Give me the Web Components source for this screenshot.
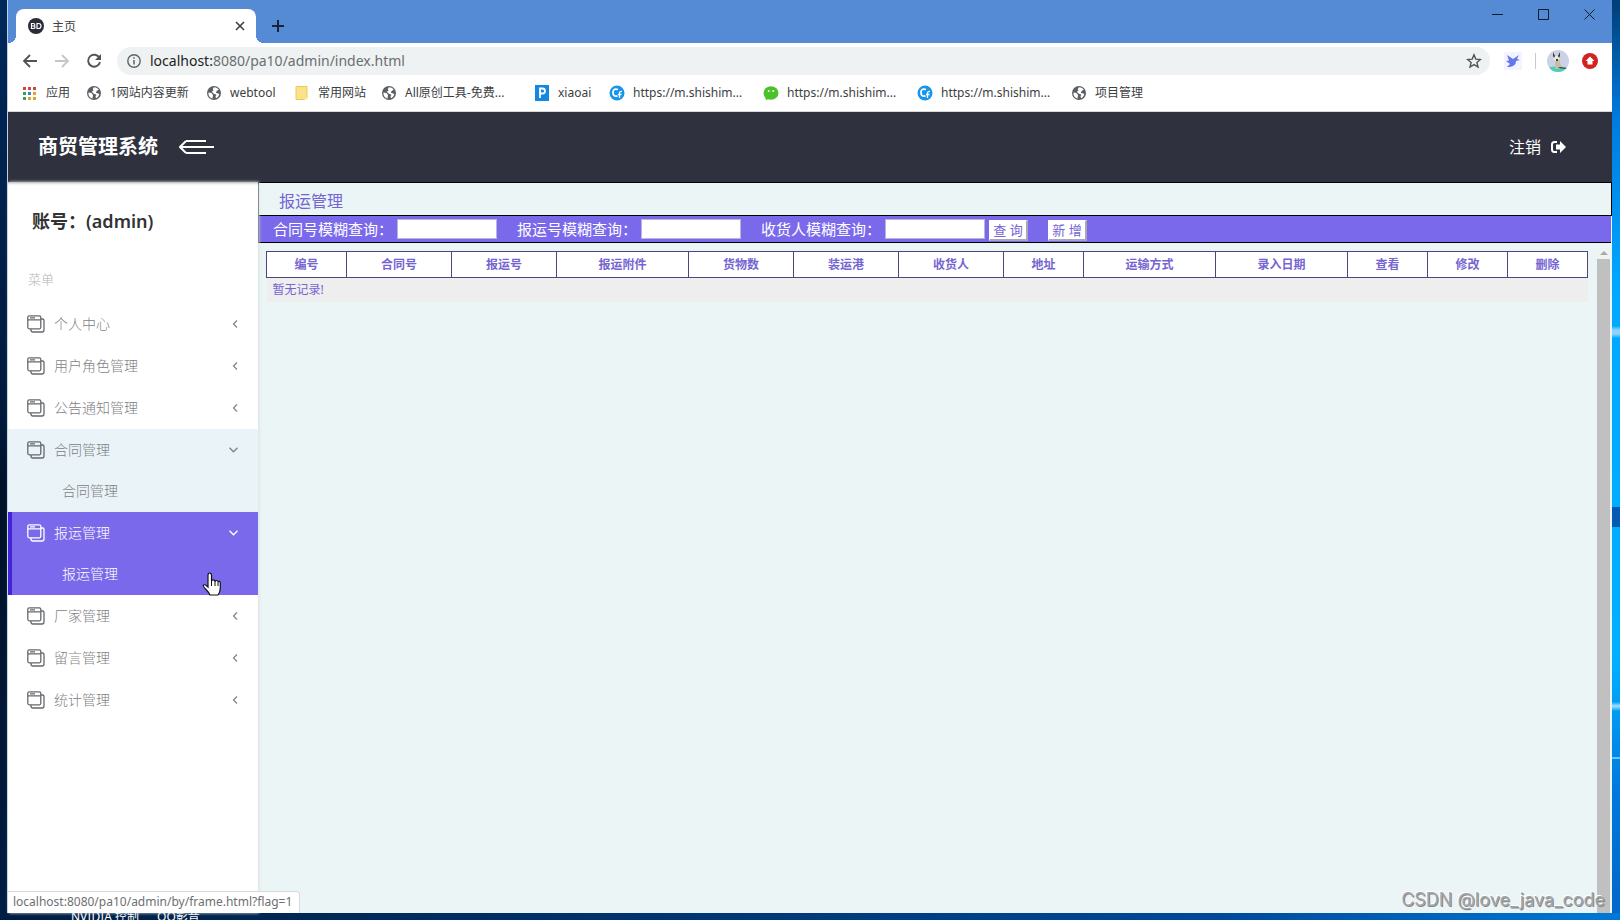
<!DOCTYPE html>
<html lang="zh-CN">
<head>
<meta charset="utf-8">
<title>主页</title>
<style>
html, body { margin: 0; height: 100%; }
body { font-family: "Noto Sans", "Noto Sans CJK SC", sans-serif; font-size: 14px; overflow: hidden; }
</style>
</head>
<body>
<desktop-screen>
  <browser-window>
    <tab-strip slot="chrome"></tab-strip>
    <address-bar slot="chrome"></address-bar>
    <bookmark-bar slot="chrome">
      <book-mark icon="apps">应用</book-mark>
      <book-mark icon="globe">1网站内容更新</book-mark>
      <book-mark icon="globe">webtool</book-mark>
      <book-mark icon="folder">常用网站</book-mark>
      <book-mark icon="globe">All原创工具-免费...</book-mark>
      <book-mark icon="p">xiaoai</book-mark>
      <book-mark icon="c">https://m.shishim...</book-mark>
      <book-mark icon="chat">https://m.shishim...</book-mark>
      <book-mark icon="c">https://m.shishim...</book-mark>
      <book-mark icon="globe">项目管理</book-mark>
    </bookmark-bar>
    <app-header></app-header>
    <app-body>
      <side-menu slot="side">
        <menu-group label="个人中心"></menu-group>
        <menu-group label="用户角色管理"></menu-group>
        <menu-group label="公告通知管理"></menu-group>
        <menu-group label="合同管理" state="open"><menu-link>合同管理</menu-link></menu-group>
        <menu-group label="报运管理" state="active"><menu-link>报运管理</menu-link></menu-group>
        <menu-group label="厂家管理"></menu-group>
        <menu-group label="留言管理"></menu-group>
        <menu-group label="统计管理"></menu-group>
      </side-menu>
      <shipping-page></shipping-page>
    </app-body>
  </browser-window>
</desktop-screen>

<script>
function define(name, html, setup) {
  const template = document.createElement('template');
  template.innerHTML = '<style>:host,*{box-sizing:border-box}</style>' + html;
  customElements.define(name, class extends HTMLElement {
    constructor() {
      super();
      this.attachShadow({ mode: 'open' }).append(template.content.cloneNode(true));
    }
    connectedCallback() { if (setup) setup(this, this.shadowRoot); }
  });
}

define('desktop-screen', `
<style>
:host { display: grid; grid-template: minmax(0,1fr) 7px / 8px minmax(0,1fr) 8px; height: 100vh;
  background: linear-gradient(90deg, #001d42, #002857 20%, #00499a 75%, #0078d7); }
.left { background: linear-gradient(#00285a, #001a3c 45%, #001128 55%, #001d42); }
.right { background:
  linear-gradient(transparent 326px, #8fd4ff 330px, #8fd4ff 334px, transparent 338px),
  linear-gradient(transparent 507px, #0559b4 507px, #0559b4 527px, transparent 527px),
  linear-gradient(transparent 702px, #a5e3ff 706px, transparent 711px),
  linear-gradient(transparent 757px, #62c4ff 757px, #62c4ff 759px, transparent 759px),
  linear-gradient(#003d75, #0068bd 80px, #007be0 120px, #00a8ff 290px, #00b0ff 660px, #0078dc 790px, #0068c8); }
.icons { grid-column: 2; display: flex; align-items: center; gap: 18px; padding-left: 63px;
  height: 7px; overflow: hidden; color: #fff; font-size: 12px; line-height: 14px; white-space: nowrap; }
</style>
<div class="left"></div><slot></slot><div class="right"></div>
<div class="icons"><span>NVIDIA 控制</span><span>QQ影音</span></div>`);

define('browser-window', `
<style>
:host { display: flex; flex-direction: column; position: relative; min-width: 0; min-height: 0; background: #fff; border-left: 1px solid #bfd0e0; margin-left: -1px; }
::slotted(app-body) { flex: 1; }
output { position: absolute; left: 0; bottom: 0; height: 22px; padding: 0 7px 0 5px; background: #fff; border: 1px solid #d5dade;
  border-left: 0; border-bottom: 0; border-top-right-radius: 4px; color: #6d7073; font-size: 12px; line-height: 20px; white-space: nowrap; }
.mark { position: absolute; right: 7px; bottom: 1px; color: #a3a7a8; font: 18px/24px Inter, sans-serif; text-shadow: 1px 1px 0 #888, -1px -1px 0 #fff; }
</style>
<slot name="chrome"></slot><slot></slot>
<output>localhost:8080/pa10/admin/by/frame.html?flag=1</output>
<span class="mark">CSDN @love_java_code</span>`);

define('tab-strip', `
<style>
:host { display: flex; height: 43px; flex: none; background: #558bd4; padding-left: 8px; align-items: flex-end; }
.tab { position: relative; display: flex; align-items: center; width: 240px; height: 34px; background: #fff; border-radius: 8px 8px 0 0; padding: 0 8px 0 12px; font-size: 12px; color: #3c4043; }
.tab::before, .tab::after { content: ""; position: absolute; bottom: 0; width: 8px; height: 8px; }
.tab::before { left: -8px; background: radial-gradient(circle at 0 0, transparent 8px, #fff 8px); }
.tab::after { right: -8px; background: radial-gradient(circle at 100% 0, transparent 8px, #fff 8px); }
.tab span { flex: 1; padding-left: 8px; }
button { background: none; border: 0; padding: 0; display: grid; place-items: center; }
.tab button { width: 16px; height: 16px; }
.new { width: 28px; height: 34px; margin-left: 8px; }
.win { margin-left: auto; align-self: flex-start; display: flex; }
.win button { width: 46px; height: 29px; }
svg { display: block; fill: none; }
</style>
<div class="tab">
<svg width="16" height="16"><circle cx="8" cy="8" r="8" fill="#2a2c38"/><path d="M3.500 5.500v5h2q1.500 0 1.500-1.300 0-1-1-1.200.8-.3.8-1.200 0-1.300-1.500-1.300zM3.500 8h2.500M9 5.500v5h1.500q2.500 0 2.500-2.500t-2.500-2.500z" stroke="#fff" stroke-width="1.200"/></svg>
<span>主页</span>
<button aria-label="关闭标签"><svg width="10" height="10"><path d="M1 1l8 8M9 1l-8 8" stroke="#3c4043" stroke-width="1.600"/></svg></button></div>
<button class="new" aria-label="新标签"><svg width="12" height="12"><path d="M6 0v12M0 6h12" stroke="#172438" stroke-width="2"/></svg></button>
<div class="win">
<button aria-label="最小化"><svg width="11" height="11"><path d="M0 5.500h11" stroke="#101c2c"/></svg></button>
<button aria-label="最大化"><svg width="11" height="11"><path d="M.5.5h10v10h-10z" stroke="#101c2c"/></svg></button>
<button aria-label="关闭"><svg width="11" height="11"><path d="M.5.5l10 10M10.500.5l-10 10" stroke="#101c2c"/></svg></button>
</div>`);

define('address-bar', `
<style>
:host { display: flex; align-items: center; height: 36px; flex: none; padding: 0 14px; background: #fff; }
button { border: 0; background: none; padding: 0; width: 16px; height: 16px; margin-right: 16px; flex: none; }
.box { flex: 1; display: flex; align-items: center; height: 28px; background: #eff2f2; border-radius: 14px; padding: 0 8px 0 10px; margin: 0 14px 0 -1px; }
.field { position: relative; flex: 1; margin-left: 9px; font-size: 14px; line-height: 28px; color: #6a6e71; }
b { font-weight: 400; color: #222; }
.field input { position: absolute; inset: 0; width: 100%; border: 0; padding: 0; background: none; outline: 0; font: inherit; }
svg { display: block; fill: none; flex: none; }
.box button { margin: 0; }
.sep { width: 1px; height: 16px; background: #c6cacc; margin: 0 11px 0 13px; }
.up { margin-left: 13px; }
</style>
<button aria-label="后退"><svg width="16" height="16"><path d="M15 8H2M8 2L2 8l6 6" stroke="#505357" stroke-width="1.800"/></svg></button>
<button aria-label="前进"><svg width="16" height="16"><path d="M1 8h13M8 2l6 6-6 6" stroke="#c4c6c8" stroke-width="1.800"/></svg></button>
<button aria-label="刷新"><svg width="16" height="16"><path d="M13.500 5A6 6 0 1 0 14 9" stroke="#505357" stroke-width="1.900"/><path d="M15 1v6H9z" fill="#505357"/></svg></button>
<div class="box">
<svg width="14" height="14"><circle cx="7" cy="7" r="6.200" stroke="#5f6368" stroke-width="1.400"/><path d="M7 6v4.500M7 3.200v1.600" stroke="#5f6368" stroke-width="1.500"/></svg>
<div class="field"><b>localhost:</b>8080/pa10/admin/index.html<input aria-label="地址"></div>
<button aria-label="收藏"><svg width="16" height="16"><path d="M8 1.800l1.800 4.300 4.600.4-3.500 3 1.100 4.500L8 11.600 4 14l1.100-4.500-3.500-3 4.600-.4z" stroke="#505357" stroke-width="1.400"/></svg></button>
</div>
<svg width="18" height="18"><path d="M0 0h18v18H0z" fill="#f3f4ff"/><path d="M3 3l6 4 6-4-2 4 3 1-4 1c0 4-3 6-9 6l3-3-4-3 3-.5z" fill="#6378f0"/></svg>
<span class="sep"></span>
<svg width="22" height="22"><defs><clipPath id="a"><circle cx="11" cy="11" r="11"/></clipPath></defs><g clip-path="url(#a)"><path d="M0 0h22v22H0z" fill="#cbd2e6"/><path d="M0 18l9-2 13 2v4H0z" fill="#47cfb7"/><path d="M8 8l4-1 2 9 5 2-11 1z" fill="#c6bda9"/><path d="M6 3l2 3h3l2-3v5l-2 3H8L6 8z" fill="#eee9df"/><path d="M6 2l2 4-1 2-1-2zM13 2l-2 4 1 2 1-2zM9 9h2v2H9zM13 17l7 1v1l-9-1z" fill="#33383d"/></g></svg>
<svg class="up" width="16" height="16"><circle cx="8" cy="8" r="8" fill="#d3231e"/><path d="M8 3.500L12.500 8H10.500v3.500h-5V8H3.500z" fill="#fff"/></svg>`);

define('bookmark-bar', `
<style>
:host { display: grid; grid-template-columns: 64px 120px 88px 87px 153px 75px 154px 154px 154px auto; align-items: center;
  height: 33px; flex: none; padding: 0 15px 4px; background: #fff; border-bottom: 1px solid #d5d7d8; }
</style><slot></slot>`);

const bookmarkIcons = {
  apps: ['#d5473b', '#d5473b', '#c84b40', '#3f9c58', '#3b82c8', '#e0a62c', '#3f9c58', '#d9a72e', '#d9a72e']
    .map((c, i) => `<rect x="${(i % 3) * 5}" y="${Math.floor(i / 3) * 5 + 1}" width="3" height="3" fill="${c}"/>`).join(''),
  globe: '<circle cx="7" cy="7" r="7" fill="#5b5f64"/><path d="M1.500 6.500l3 .5 1.500 2-.5 3.500C3 12 1 9.500 1.500 6.500zM7 1.200c2.500 0 3.800 1 4.800 2.500l-2 1-1 2 2.500.8 1 .8c-.5 2-1.600 3.200-3.300 4l-.5-2 1-1.500-3-1.300-1.700-1.700 1.700-1.300-.8-1.500z" fill="#fff"/>',
  folder: '<path d="M1 .5h11v13H1z" fill="#f9e38a" stroke="#ecca5a"/><path d="M9 14l3.500-3.500V14z" fill="#fff3bd"/>',
  p: '<path d="M0-1h14v16H0z" fill="#1488e0"/><path d="M5 12V2.500h2.500Q10 2.500 10 5T7.500 7.500H5" fill="none" stroke="#fff" stroke-width="1.800"/>',
  c: '<circle cx="7" cy="7" r="7.500" fill="#1695ea"/><path d="M8 3.500Q3 2 3 6.500T7.500 10" fill="none" stroke="#fff" stroke-width="1.800"/><path d="M12 5.500Q9.500 5 9.500 7.500V12M8 8.500h3.500" fill="none" stroke="#fff" stroke-width="1.300"/>',
  chat: '<ellipse cx="7" cy="7" rx="7.500" ry="6.700" fill="#4bc229"/><path d="M1 11l1 3 3-1z" fill="#4bc229"/><circle cx="4.700" cy="5" r="1" fill="#fff"/><circle cx="9.300" cy="5" r="1" fill="#fff"/>'
};
define('book-mark', `
<style>
:host { display: block; min-width: 0; }
a { display: flex; align-items: center; gap: 9px; color: #3c4043; font-size: 12px; line-height: 20px; text-decoration: none; white-space: nowrap; }
svg { flex: none; overflow: visible; }
</style><a href="#"><svg width="14" height="14"></svg><span><slot></slot></span></a>`,
(el, root) => { root.querySelector('svg').innerHTML = bookmarkIcons[el.getAttribute('icon')]; });

define('app-header', `
<style>
:host { display: flex; align-items: center; height: 70px; flex: none; background: #2f323e; color: #fff; padding: 0 46px 0 30px; }
h1 { margin: 0 21px 0 0; font-size: 20px; line-height: 28px; font-weight: 700; }
button { background: none; border: 0; padding: 0; }
svg { display: block; fill: none; }
a { margin-left: auto; display: flex; align-items: center; gap: 10px; color: #fff; font-size: 16px; line-height: 24px; text-decoration: none; }
</style>
<h1>商贸管理系统</h1>
<button aria-label="收起菜单"><svg width="35" height="16"><path d="M7 2h20M1 8h34M7 14h20M7 2L1 8l6 6" stroke="#fff" stroke-width="2"/></svg></button>
<a href="#">注销<svg width="15" height="14"><path d="M6 2H3.500Q1 2 1 4.500v5Q1 12 3.500 12H6" stroke="#fff" stroke-width="2"/><path d="M5 4.500h4V1l6 6-6 6V9.500H5z" fill="#fff"/></svg></a>`);

define('app-body', `
<style>
:host { display: grid; grid-template-columns: 250px minmax(0,1fr); min-height: 0; background: #ebf5f5; }
</style><slot name="side"></slot><slot></slot>`);

define('side-menu', `
<style>
:host { display: block; position: relative; background: #fff; box-shadow: inset 0 3px 3px -2px #aaa, 1px 0 3px #d8e3e4; }
h2 { margin: 0; padding: 26px 0 0 24px; font-size: 18px; line-height: 26px; font-weight: 600; color: #333; }
p { margin: 0; padding: 35px 0 14px 20px; font-size: 13px; line-height: 20px; color: #b4b4b4; font-weight: 300; }
.hand { position: absolute; left: 194px; top: 390px; }
</style>
<h2>账号：(admin)</h2><p>菜单</p><nav><slot></slot></nav>
<svg class="hand" width="19" height="25"><path d="M6 15V3.200Q6 1 7.700 1t1.800 2.200V9q.3-1.200 1.800-1.200T13 9.500q.3-1 1.600-1t1.600 1.500q.2-.7 1-.7t1.100 1.300V16q0 4-2.300 7H8q-1.500-3-4-5.500Q.5 14 1.500 13q1.500-1 4.500 2z" fill="#fff" stroke="#111" stroke-width="1.200"/><path d="M9.500 8v6M13 9v5M16 10v4" stroke="#111" fill="none"/></svg>`);

define('menu-group', `
<style>
:host { display: block; color: #808285; }
:host([state=open]) { background: #eaf3f7; }
:host([state=active]) { background: #7b69eb; color: #fff; box-shadow: inset 4px 0 0 #4325d8; }
button { width: 100%; height: 42px; display: flex; align-items: center; gap: 9px; padding: 0 20px 0 19px; border: 0; background: none; color: inherit; font: 300 14px/20px "Noto Sans", "Noto Sans CJK SC", sans-serif; text-align: left; }
span { flex: 1; }
svg { display: block; fill: none; stroke: currentColor; flex: none; }
.icon { color: #66696d; }
:host([state=active]) .icon { color: #fff; }
.arrow.down { display: none; }
:host([state]) .arrow.left { display: none; }
:host([state]) .arrow.down { display: block; }
</style>
<button><svg class="icon" width="18" height="18" stroke-width="1.300"><rect x=".8" y=".8" width="13" height="13" rx="1.500"/><path d="M.8 4.800h13M3 2.800h5M14 4h1.500Q17 4 17 5.500V15q0 2-2 2H6q-2 0-2-2v-1"/></svg>
<span></span>
<svg class="arrow left" width="6" height="8"><path d="M5 .5L1.500 4 5 7.500" stroke-width="1.200"/></svg>
<svg class="arrow down" width="9" height="6"><path d="M.5.8l4 4 4-4" stroke-width="1.300"/></svg></button><slot></slot>`,
(el, root) => { root.querySelector('span').textContent = el.getAttribute('label'); });

define('menu-link', `
<style>
:host { display: block; }
a { display: block; padding: 0 0 1px 54px; font-size: 14px; line-height: 40px; font-weight: 300; color: inherit; text-decoration: none; }
</style><a href="#"><slot></slot></a>`);

define('search-field', `
<style>
:host { display: flex; align-items: center; margin-right: 20px; }
:host(:last-of-type) { margin-right: 4px; }
label { font-size: 15px; line-height: 24px; margin-right: 4px; white-space: nowrap; color: #fff; }
input { width: 100px; height: 20px; border: 1px solid #b9b4dc; background: #fff; padding: 1px; margin: 0; }
</style><label for="q"></label><input id="q" type="text">`,
(el, root) => { root.querySelector('label').textContent = el.getAttribute('label'); });

define('shipment-table', `
<style>
:host { display: block; }
table { width: 100%; border-collapse: collapse; table-layout: fixed; font-size: 12px; line-height: 18px; color: #7565d2; }
th { height: 26px; padding: 0; background: #fff; border: 1px solid #4f4578; font-weight: 700; }
td { height: 24px; padding: 0 6px; background: #eee; }
.a { width: 80px; } .b { width: 105px; } .c { width: 132px; }
</style>
<table><thead><tr>
<th class="a">编号</th><th class="b">合同号</th><th class="b">报运号</th><th class="c">报运附件</th><th class="b">货物数</th><th class="b">装运港</th><th class="b">收货人</th><th class="a">地址</th><th class="c">运输方式</th><th class="c">录入日期</th><th class="a">查看</th><th class="a">修改</th><th class="a">删除</th>
</tr></thead><tbody><tr><td colspan="13">暂无记录!</td></tr></tbody></table>`);

define('shipping-page', `
<style>
:host { display: flex; flex-direction: column; min-width: 0; min-height: 0; }
h2 { margin: 0; height: 34px; border: 1px solid #000; padding: 2px 0 0 20px; color: #7464d4; font-size: 16px; line-height: 32px; font-weight: 400; flex: none; }
form { display: flex; align-items: center; height: 27px; flex: none; margin-right: 1px; background: #7b69eb; border: solid #000; border-width: 0 0 1px 1px; padding-left: 14px; }
button { width: 39px; height: 21px; margin: 3px 20px 0 0; border: 1px solid #fff; border-right: 2px solid #aaa6ba; border-bottom: 2px solid #aaa6ba; padding: 0; background: #fff; color: #7464d4; font: 13px/18px "Noto Sans", "Noto Sans CJK SC", sans-serif; white-space: nowrap; }
.list { flex: 1; display: flex; min-height: 0; padding: 8px 2px 0 8px; }
shipment-table { flex: 1; }
.bar { width: 14px; margin-left: 9px; display: flex; flex-direction: column; align-items: center; background: #eef3f3; }
.bar::before { content: ""; border: 4px solid transparent; border-top: 0; border-bottom: 4px solid #a9a9a9; margin: 0 0 4px; }
.thumb { flex: 1; width: 13px; background: #c0c0c0; }
</style>
<h2>报运管理</h2>
<form><search-field label="合同号模糊查询："></search-field><search-field label="报运号模糊查询："></search-field><search-field label="收货人模糊查询："></search-field>
<button type="button">查 询</button><button type="button">新 增</button></form>
<div class="list"><shipment-table></shipment-table><div class="bar"><div class="thumb"></div></div></div>`);
</script>
</body>
</html>
